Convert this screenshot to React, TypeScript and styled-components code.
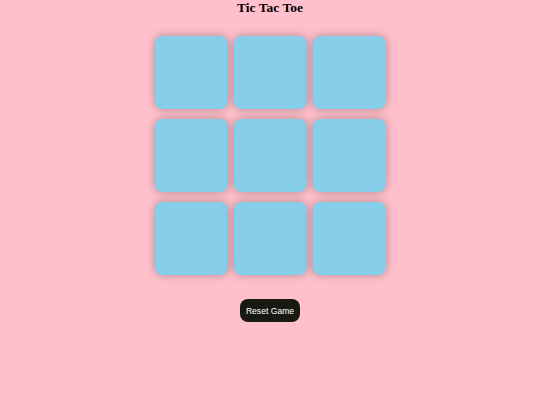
import React, { useState } from "react";
import styled, { createGlobalStyle } from "styled-components";

const GlobalStyle = createGlobalStyle`
  html, body {
    margin: 0;
    padding: 0;
    background: #ffc0cb;
  }
  body {
    font-family: "Liberation Serif", "Times New Roman", serif;
  }
`;

const Page = styled.div`
  width: 540px;
  height: 405px;
  display: flex;
  flex-direction: column;
  align-items: center;
  background: #ffc0cb;
`;

const Title = styled.h1`
  margin: 0;
  font-size: 13.5px;
  line-height: 16px;
  font-weight: bold;
  color: #000;
`;

const Board = styled.div`
  margin-top: 20px;
  display: grid;
  grid-template-columns: repeat(3, 73px);
  grid-auto-rows: 73px;
  column-gap: 6px;
  row-gap: 10px;
`;

const Cell = styled.button`
  width: 73px;
  height: 73px;
  border: none;
  border-radius: 8px;
  background: #87ceeb;
  box-shadow: 0 0 10px rgba(0, 0, 0, 0.3);
  font-family: "Liberation Sans", Arial, sans-serif;
  font-size: 40px;
  color: #000;
  cursor: pointer;
  padding: 0;
`;

const ResetButton = styled.button`
  margin-top: 24px;
  height: 23px;
  padding: 0 6px;
  border: none;
  border-radius: 8px;
  background: #191913;
  color: #fff;
  font-family: "Liberation Sans", Arial, sans-serif;
  font-size: 8.6px;
  cursor: pointer;
`;

export default function App() {
  const [cells, setCells] = useState<string[]>(Array(9).fill(""));
  const [turn, setTurn] = useState<"X" | "O">("X");

  const play = (i: number) => {
    if (cells[i]) return;
    const next = [...cells];
    next[i] = turn;
    setCells(next);
    setTurn(turn === "X" ? "O" : "X");
  };

  const reset = () => {
    setCells(Array(9).fill(""));
    setTurn("X");
  };

  return (
    <>
      <GlobalStyle />
      <Page>
        <Title>Tic Tac Toe</Title>
        <Board>
          {cells.map((c, i) => (
            <Cell key={i} onClick={() => play(i)}>
              {c}
            </Cell>
          ))}
        </Board>
        <ResetButton onClick={reset}>Reset Game</ResetButton>
      </Page>
    </>
  );
}
